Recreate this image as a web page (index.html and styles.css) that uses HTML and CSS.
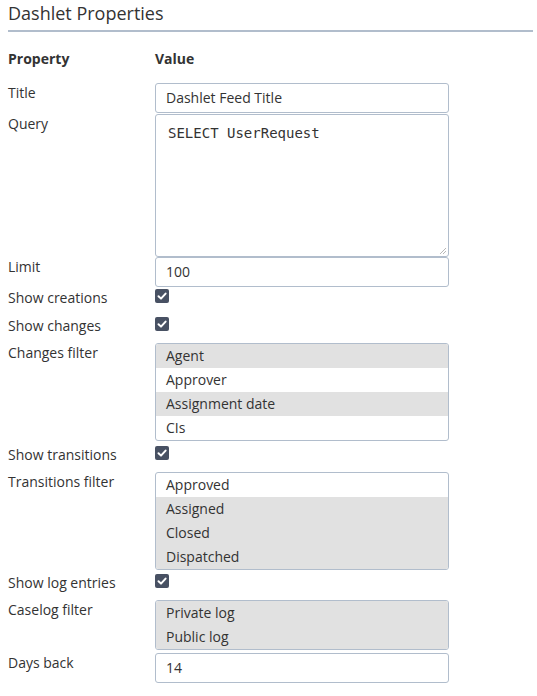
FILE: index.html
```html
<!DOCTYPE html>
<html>
<head>
<meta charset="utf-8">
<link rel="stylesheet" href="styles.css">
</head>
<body>
<div class="page">
  <h1 class="title">Dashlet Properties</h1>
  <div class="props">
    <div class="row head">
      <div class="label">Property</div>
      <div class="field">Value</div>
    </div>
    <div class="row r-input">
      <div class="label">Title</div>
      <div class="field"><div class="input">Dashlet Feed Title</div></div>
    </div>
    <div class="row r-area">
      <div class="label">Query</div>
      <div class="field"><div class="textarea">SELECT UserRequest<svg class="grip" width="8" height="8" viewBox="0 0 8 8"><path d="M7 1L1 7M7 4L4 7" stroke="#b8b8b8" stroke-width="1"/></svg></div></div>
    </div>
    <div class="row r-input">
      <div class="label">Limit</div>
      <div class="field"><div class="input">100</div></div>
    </div>
    <div class="row r-check first">
      <div class="label">Show creations</div>
      <div class="field"><span class="check"><svg width="14" height="14" viewBox="0 0 14 14"><path d="M3.5 7.2L6 9.6L10.6 4.6" fill="none" stroke="#fff" stroke-width="2" stroke-linecap="round" stroke-linejoin="round"/></svg></span></div>
    </div>
    <div class="row r-check">
      <div class="label">Show changes</div>
      <div class="field"><span class="check"><svg width="14" height="14" viewBox="0 0 14 14"><path d="M3.5 7.2L6 9.6L10.6 4.6" fill="none" stroke="#fff" stroke-width="2" stroke-linecap="round" stroke-linejoin="round"/></svg></span></div>
    </div>
    <div class="row r-select">
      <div class="label">Changes filter</div>
      <div class="field">
        <div class="list">
          <div class="opt sel">Agent</div>
          <div class="opt">Approver</div>
          <div class="opt sel">Assignment date</div>
          <div class="opt">CIs</div>
        </div>
      </div>
    </div>
    <div class="row r-check">
      <div class="label">Show transitions</div>
      <div class="field"><span class="check"><svg width="14" height="14" viewBox="0 0 14 14"><path d="M3.5 7.2L6 9.6L10.6 4.6" fill="none" stroke="#fff" stroke-width="2" stroke-linecap="round" stroke-linejoin="round"/></svg></span></div>
    </div>
    <div class="row r-select">
      <div class="label">Transitions filter</div>
      <div class="field">
        <div class="list">
          <div class="opt">Approved</div>
          <div class="opt sel">Assigned</div>
          <div class="opt sel">Closed</div>
          <div class="opt sel">Dispatched</div>
        </div>
      </div>
    </div>
    <div class="row r-check">
      <div class="label">Show log entries</div>
      <div class="field"><span class="check"><svg width="14" height="14" viewBox="0 0 14 14"><path d="M3.5 7.2L6 9.6L10.6 4.6" fill="none" stroke="#fff" stroke-width="2" stroke-linecap="round" stroke-linejoin="round"/></svg></span></div>
    </div>
    <div class="row r-select">
      <div class="label">Caselog filter</div>
      <div class="field">
        <div class="list">
          <div class="opt sel">Private log</div>
          <div class="opt sel">Public log</div>
        </div>
      </div>
    </div>
    <div class="row r-input">
      <div class="label">Days back</div>
      <div class="field"><div class="input">14</div></div>
    </div>
  </div>
</div>
</body>
</html>
```
FILE: styles.css
```css
html, body {
  margin: 0;
  padding: 0;
  background: #fff;
}
body {
  font-family: "Open Sans", "Liberation Sans", sans-serif;
  font-size: 14px;
  color: #333;
}
.page {
  padding: 0 4px 0 8px;
}
.title {
  margin: 0;
  font-size: 18px;
  font-weight: 400;
  line-height: 26px;
  padding-bottom: 4px;
  border-bottom: 2px solid #b1bdcc;
  color: #333;
}
.props {
  margin-top: 17px;
  display: flex;
  flex-direction: column;
}
.row {
  display: flex;
  align-items: flex-start;
}
.label {
  width: 147px;
  flex: none;
  line-height: 20px;
}
.field {
  width: 294px;
  flex: none;
  line-height: 20px;
}
.head {
  font-weight: 700;
  height: 34px;
}
.input {
  box-sizing: border-box;
  height: 30px;
  border: 1px solid #b1bdcc;
  border-radius: 3px;
  padding: 0 10px;
  line-height: 28px;
  margin-bottom: 1px;
}
.textarea {
  position: relative;
  box-sizing: border-box;
  height: 143px;
  border: 1px solid #b1bdcc;
  border-radius: 3px;
  padding: 8px 12px;
  font-family: "DejaVu Sans Mono", monospace;
  font-size: 14px;
  line-height: 20px;
}
.grip {
  position: absolute;
  right: 1px;
  bottom: 1px;
}
.r-check {
  height: 27px;
}
.r-check.first {
  height: 28px;
}
.check {
  display: block;
  width: 14px;
  height: 14px;
  margin-top: 1px;
  border-radius: 2px;
  background: #485163;
}
.check svg {
  display: block;
}
.list {
  box-sizing: border-box;
  border: 1px solid #b1bdcc;
  border-radius: 3px;
  overflow: hidden;
  margin-bottom: 3px;
}
.r-select:nth-child(7) .list {
  margin-bottom: 4px;
}
.opt {
  height: 24px;
  line-height: 24px;
  padding: 0 10px;
}
.opt.sel {
  background: #e1e1e1;
}
```
